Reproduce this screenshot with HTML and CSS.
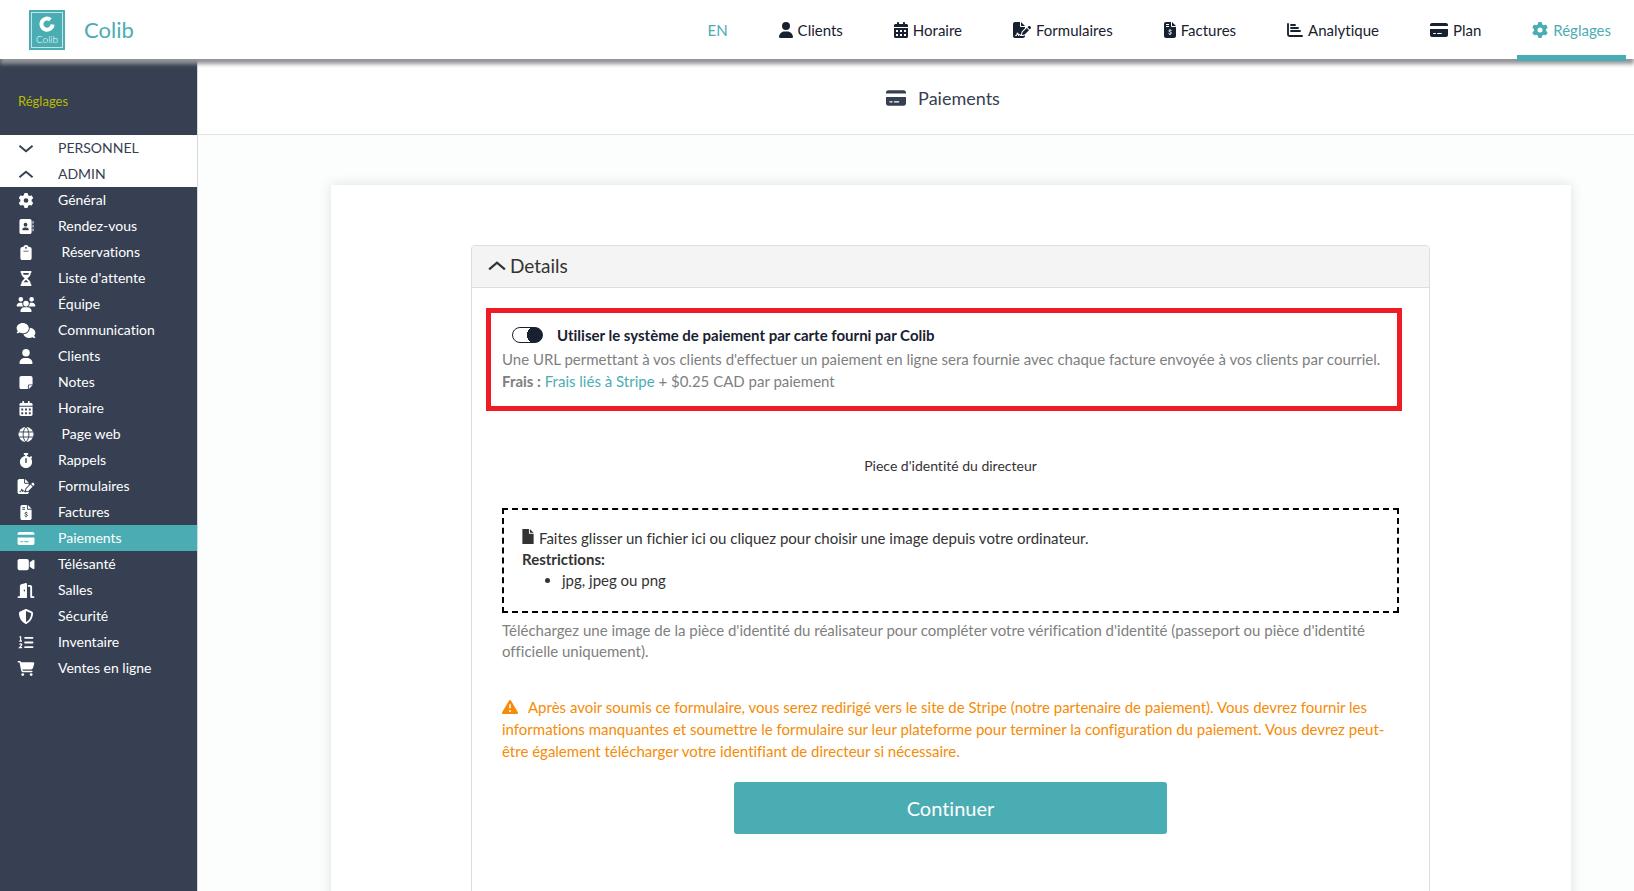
FILE: index.html
```html
<!DOCTYPE html>
<html lang="fr">
<head>
<meta charset="utf-8">
<title>Colib – Paiements</title>
<link rel="stylesheet" href="styles.css">
</head>
<body>
<svg class="sprite" aria-hidden="true">
  <symbol id="user" viewBox="0 0 448 512"><path d="M224 256A128 128 0 1 0 224 0a128 128 0 1 0 0 256zm-45.700 48C79.800 304 0 383.800 0 482.300C0 498.700 13.300 512 29.700 512H418.300c16.400 0 29.700-13.300 29.700-29.700C448 383.800 368.200 304 269.700 304H178.300z"/></symbol>
  <symbol id="calendar" viewBox="0 0 448 512"><path fill-rule="evenodd" d="M128 0c17.700 0 32 14.300 32 32V64H288V32c0-17.700 14.300-32 32-32s32 14.300 32 32V64h48c26.500 0 48 21.500 48 48v48H0V112C0 85.500 21.500 64 48 64H96V32c0-17.700 14.300-32 32-32zM0 192H448V464c0 26.500-21.500 48-48 48H48c-26.500 0-48-21.500-48-48zM64 256v64h64v-64zM192 256v64h64v-64zM320 256v64h64v-64zM64 384v64h64v-64zM192 384v64h64v-64zM320 384v64h64v-64z"/></symbol>
  <symbol id="signature" viewBox="0 0 576 512"><path d="M64 0C28.700 0 0 28.700 0 64V448c0 35.300 28.700 64 64 64H320c35.300 0 64-28.700 64-64V428.700c-2.700 1.100-5.400 2-8.200 2.700l-60.100 15c-3 .7-6 1.200-9 1.400c-.9 .1-1.800 .2-2.700 .2H240c-6.100 0-11.600-3.400-14.300-8.800l-8.800-17.700c-1.700-3.400-5.100-5.500-8.800-5.500s-7.200 2.100-8.800 5.500l-8.800 17.700c-2.900 5.900-9.200 9.400-15.700 8.800s-12.100-5.100-13.900-11.300L144 381l-9.800 32.800c-6.100 20.300-24.800 34.200-46 34.200H80c-8.800 0-16-7.200-16-16s7.200-16 16-16h8.200c7.100 0 13.300-4.600 15.300-11.400l14.900-49.500c3.400-11.300 13.800-19.100 25.600-19.100s22.200 7.700 25.600 19.100l11.600 38.600c7.400-6.200 16.800-9.700 26.800-9.700c15.900 0 30.400 9 37.500 23.200l4.400 8.800h8.900c-3.100-8.800-3.700-18.400-1.400-27.800l15-60.100c2.800-11.300 8.600-21.500 16.800-29.700L384 203.600V160H256c-17.700 0-32-14.300-32-32V0H64zM256 0V128H384L256 0zM549.800 139.700c-15.600-15.600-40.900-15.600-56.600 0l-29.400 29.400 71 71 29.400-29.400c15.600-15.600 15.600-40.900 0-56.600l-14.400-14.400zM311.900 321c-4.100 4.100-7 9.200-8.400 14.900l-15 60.100c-1.400 5.500 .2 11.200 4.200 15.200s9.700 5.600 15.200 4.200l60.100-15c5.600-1.400 10.800-4.300 14.900-8.400L512.100 262.700l-71-71L311.900 321z"/></symbol>
  <symbol id="invoice" viewBox="0 0 384 512"><path fill-rule="evenodd" d="M64 0C28.700 0 0 28.700 0 64V448c0 35.300 28.700 64 64 64H320c35.300 0 64-28.700 64-64V160H256c-17.700 0-32-14.300-32-32V0zM256 0V128H384zM64 64h96v32H64zM64 128h96v32H64z"/><path class="cut" d="M242 276c-18-13-77-26-87 7-10 38 80 29 84 68 2 40-68 38-94 13M192 232v34M192 384v34"/></symbol>
  <symbol id="chart" viewBox="0 0 512 512"><path class="bar" d="M32 64V400a48 48 0 0 0 48 48H480M128 96H256M128 192H352M128 288H416"/></symbol>
  <symbol id="card" viewBox="0 0 576 512"><path fill-rule="evenodd" d="M64 32C28.700 32 0 60.700 0 96v32H576V96c0-35.300-28.700-64-64-64zM576 224H0V416c0 35.300 28.700 64 64 64H512c35.300 0 64-28.700 64-64zM112 352h64c21 0 21 32 0 32h-64c-21 0-21-32 0-32zM240 352h128c21 0 21 32 0 32H240c-21 0-21-32 0-32z"/></symbol>
  <symbol id="gear" viewBox="0 0 512 512"><path d="M495.900 166.600c3.200 8.700 .5 18.400-6.400 24.600l-43.300 39.400c1.100 8.300 1.700 16.800 1.700 25.400s-.6 17.100-1.700 25.400l43.300 39.400c6.900 6.200 9.600 15.900 6.400 24.600c-4.400 11.900-9.700 23.300-15.800 34.300l-4.700 8.100c-6.600 11-14 21.400-22.100 31.200c-5.900 7.200-15.700 9.600-24.500 6.800l-55.700-17.700c-13.400 10.300-28.200 18.900-44 25.400l-12.500 57.100c-2 9.100-9 16.300-18.200 17.800c-13.800 2.300-28 3.500-42.500 3.500s-28.700-1.200-42.500-3.500c-9.200-1.500-16.200-8.700-18.200-17.800l-12.500-57.100c-15.800-6.500-30.600-15.100-44-25.400L83.100 425.900c-8.800 2.800-18.600 .3-24.500-6.800c-8.100-9.800-15.500-20.200-22.100-31.200l-4.700-8.100c-6.100-11-11.400-22.400-15.800-34.300c-3.200-8.700-.5-18.400 6.400-24.600l43.300-39.400C64.600 273.100 64 264.600 64 256s.6-17.100 1.700-25.400L22.400 191.200c-6.900-6.200-9.600-15.900-6.400-24.600c4.400-11.900 9.700-23.300 15.800-34.300l4.700-8.100c6.600-11 14-21.400 22.100-31.200c5.900-7.200 15.700-9.600 24.500-6.800l55.700 17.700c13.400-10.300 28.200-18.900 44-25.400l12.500-57.100c2-9.100 9-16.300 18.200-17.800C227.300 1.200 241.500 0 256 0s28.700 1.200 42.500 3.500c9.200 1.500 16.200 8.700 18.200 17.800l12.500 57.100c15.800 6.500 30.600 15.100 44 25.400l55.700-17.700c8.800-2.800 18.600-.3 24.500 6.800c8.100 9.800 15.500 20.200 22.100 31.200l4.700 8.100c6.100 11 11.400 22.400 15.800 34.300zM256 336a80 80 0 1 0 0-160 80 80 0 1 0 0 160z"/></symbol>
  <symbol id="down" viewBox="0 0 16 16"><path class="line" d="M1 5l7 6 7-6"/></symbol>
  <symbol id="up" viewBox="0 0 16 16"><path class="line" d="M1 11l7-6 7 6"/></symbol>
  <symbol id="contact" viewBox="0 0 512 512"><path fill-rule="evenodd" d="M96 0C60.700 0 32 28.700 32 64V448c0 35.300 28.700 64 64 64H384c35.300 0 64-28.700 64-64V64c0-35.300-28.700-64-64-64zM240 128a64 64 0 1 1 0 128 64 64 0 1 1 0-128zM208 288h64c44.200 0 80 35.800 80 80 0 8.800-7.200 16-16 16H144c-8.800 0-16-7.200-16-16 0-44.200 35.800-80 80-80z"/><path d="M480 64h16q16 0 16 16v64q0 16-16 16h-16zM480 192h16q16 0 16 16v64q0 16-16 16h-16zM480 320h16q16 0 16 16v64q0 16-16 16h-16z"/></symbol>
  <symbol id="clipboard" viewBox="0 0 384 512"><path fill-rule="evenodd" d="M192 0c-41.800 0-77.400 26.700-90.500 64H64C28.700 64 0 92.700 0 128V448c0 35.300 28.700 64 64 64H320c35.300 0 64-28.700 64-64V128c0-35.300-28.700-64-64-64H282.500C269.400 26.700 233.800 0 192 0zm0 64a32 32 0 1 1 0 64 32 32 0 1 1 0-64zM112 192H272c21 0 21 32 0 32H112c-21 0-21-32 0-32z"/></symbol>
  <symbol id="hourglass" viewBox="0 0 384 512"><path fill-rule="evenodd" d="M32 0C-10 0-10 64 32 64V75c0 42.400 16.900 83.100 46.900 113.100L146.700 256 78.900 323.900C48.900 353.900 32 394.600 32 437v11c-42 0-42 64 0 64H352c42 0 42-64 0-64V437c0-42.400-16.900-83.100-46.900-113.100L237.300 256l67.800-67.900C335.100 158.100 352 117.400 352 75V64c42 0 42-64 0-64zM96 64H288c0 29-5 48-16 64H112C101 112 96 93 96 64zM124 369l68-68 68 68q12 11 16 15H108z"/></symbol>
  <symbol id="team" viewBox="0 0 640 512"><path d="M144 0a80 80 0 1 1 0 160A80 80 0 1 1 144 0zM512 0a80 80 0 1 1 0 160A80 80 0 1 1 512 0zM0 298.700C0 239.800 47.800 192 106.700 192h42.700c15.900 0 31 3.500 44.600 9.700-1.300 7.200-1.900 14.700-1.900 22.300 0 38.200 16.800 72.500 43.300 96H21.300C9.600 320 0 310.400 0 298.700zM405.300 320h-.7c26.600-23.500 43.300-57.800 43.300-96 0-7.600-.7-15-1.900-22.300 13.600-6.300 28.700-9.700 44.600-9.700h42.700C592.200 192 640 239.800 640 298.700c0 11.800-9.600 21.300-21.300 21.300zM224 224a96 96 0 1 1 192 0 96 96 0 1 1-192 0zM128 485.300C128 411.700 187.700 352 261.300 352h117.300C452.300 352 512 411.700 512 485.300c0 14.700-11.900 26.700-26.700 26.700H154.700c-14.700 0-26.700-11.900-26.700-26.700z"/></symbol>
  <symbol id="chat" viewBox="0 0 640 512"><path d="M208 352c114.900 0 208-78.800 208-176S322.900 0 208 0 0 78.800 0 176c0 38.600 14.700 74.300 39.600 103.400-8 22-20 34-33.200 43.700C-4 331 0 352 16 352c32 0 64-12 87.300-23.900C134.100 343.300 169.800 352 208 352zM448 176c0 112.300-99.100 196.900-216.500 207C255.800 457.400 336.400 512 432 512c38.200 0 73.900-8.700 104.700-23.900C560 500 592 512 624 512c16 0 20-21 9.600-28.900-13-10-25-22-33.200-43.700C625.300 410.300 640 374.600 640 336c0-92.800-84.900-168.900-192.600-175.500.4 5.100.6 10.300.6 15.500z"/></symbol>
  <symbol id="note" viewBox="0 0 448 512"><path d="M64 32C28.700 32 0 60.700 0 96V416c0 35.300 28.700 64 64 64H288V368c0-26.500 21.500-48 48-48H448V96c0-35.300-28.700-64-64-64zM448 352H336c-8.800 0-16 7.200-16 16V480z"/></symbol>
  <symbol id="globe" viewBox="0 0 512 512"><circle cx="256" cy="256" r="256"/><path class="cut" d="M0 170H512M0 342H512M256 0C125 120 125 392 256 512M256 0C387 120 387 392 256 512"/></symbol>
  <symbol id="timer" viewBox="0 0 448 512"><path fill-rule="evenodd" d="M176 0C134 0 134 64 176 64h16v34.400C92.300 113.800 16 200 16 304c0 114.900 93.100 208 208 208s208-93.100 208-208c0-41.800-12.300-80.700-33.500-113.200l24.100-24.100c30-30-15-75-45.300-45.300l-21 21C328 118 292 103 256 98.400V64h16c42 0 42-64 0-64zM248 192V320c0 32-48 32-48 0V192c0-32 48-32 48 0z"/></symbol>
  <symbol id="video" viewBox="0 0 576 512"><path d="M64 64C28.700 64 0 92.700 0 128V384c0 35.300 28.700 64 64 64H320c35.300 0 64-28.700 64-64V128c0-35.300-28.700-64-64-64zM559 100c10 5 17 16 17 28V384c0 24-26 40-49 27l-111-74V175l111-74c10-6 22-7 32-1z"/></symbol>
  <symbol id="door" viewBox="0 0 576 512"><path fill-rule="evenodd" d="M320 32c0-20-19-35-38-31L127 39C99 46 80 72 80 100V448H32c-42 0-42 64 0 64H320zM256 256c0 42-48 42-48 0s48-42 48 0zM352 64v64h80V480c0 18 14 32 32 32h80c42 0 42-64 0-64H496V128c0-35-29-64-64-64z"/></symbol>
  <symbol id="shield" viewBox="0 0 512 512"><path fill-rule="evenodd" d="M256 0c5 0 9 1 13 3l188 80c22 9 39 31 39 57 0 99-41 281-214 363-17 8-36 8-52 0C57 421 16 239 16 140c0-26 17-48 39-57L243 3c4-2 8-3 13-3zM256 67V444c138-67 175-215 176-303z"/></symbol>
  <symbol id="list" viewBox="0 0 512 512"><path class="bar" d="M224 96H480M224 256H480M224 416H480"/><path class="digit" d="M32 64H72V208M28 208H120M36 325C60 285 112 294 110 334Q106 350 36 432H124"/></symbol>
  <symbol id="cart" viewBox="0 0 576 512"><path d="M24 0C-8 0-8 48 24 48H69l52 272c7 38 40 64 78 64H488c32 0 32-48 0-48H199c-16 0-28-11-31-25l-4-23H459c33 0 61-22 69-54L569 91c7-26-10-51-37-51H120C111 14 97 0 69 0z"/><circle cx="176" cy="464" r="48"/><circle cx="464" cy="464" r="48"/></symbol>
  <symbol id="file" viewBox="0 0 384 512"><path d="M0 0V512H384V160H224V0zM256 0V128H384z"/></symbol>
  <symbol id="warning" viewBox="0 0 512 512"><path fill-rule="evenodd" d="M256 32c14 0 27 7 35 20L507 420c16 27-5 60-35 60H40c-30 0-51-33-35-60L221 52c8-13 21-20 35-20zm-24 128V280c0 32 48 32 48 0V184c0-32-48-32-48 0zM256 352a32 32 0 1 0 0 64 32 32 0 1 0 0-64z"/></symbol>
</svg>

<header class="topbar">
  <a class="brand" href="#">
    <svg class="logo" viewBox="0 0 36 40" aria-hidden="true">
      <rect class="logo-bg" width="36" height="40"/>
      <rect class="logo-frame" x="2.500" y="2.500" width="31" height="35"/>
      <path class="logo-mark" d="M21.500 9.700A5.600 5.600 0 1 0 23.600 14.500"/>
      <text class="logo-text" x="18" y="32.500">Colib</text>
    </svg>
    <span class="brand-name">Colib</span>
  </a>
  <nav class="nav" aria-label="Navigation principale">
    <a class="nav-link accent" href="#">EN</a>
    <a class="nav-link" href="#"><svg class="ico w14"><use href="#user"/></svg>Clients</a>
    <a class="nav-link" href="#"><svg class="ico w14"><use href="#calendar"/></svg>Horaire</a>
    <a class="nav-link" href="#"><svg class="ico w18"><use href="#signature"/></svg>Formulaires</a>
    <a class="nav-link" href="#"><svg class="ico w12"><use href="#invoice"/></svg>Factures</a>
    <a class="nav-link" href="#"><svg class="ico w16"><use href="#chart"/></svg>Analytique</a>
    <a class="nav-link" href="#"><svg class="ico w18"><use href="#card"/></svg>Plan</a>
    <a class="nav-link accent current" href="#" aria-current="page"><svg class="ico w16"><use href="#gear"/></svg>Réglages</a>
  </nav>
</header>

<div class="layout">
  <aside class="sidebar">
    <h2 class="side-title">Réglages</h2>
    <button class="side-row group" type="button"><svg class="side-ico"><use href="#down"/></svg>PERSONNEL</button>
    <button class="side-row group" type="button"><svg class="side-ico"><use href="#up"/></svg>ADMIN</button>
    <nav class="side-nav" aria-label="Réglages">
      <a class="side-row" href="#"><svg class="side-ico"><use href="#gear"/></svg>Général</a>
      <a class="side-row" href="#"><svg class="side-ico"><use href="#contact"/></svg>Rendez-vous</a>
      <a class="side-row" href="#"><svg class="side-ico"><use href="#clipboard"/></svg>&nbsp;Réservations</a>
      <a class="side-row" href="#"><svg class="side-ico"><use href="#hourglass"/></svg>Liste d'attente</a>
      <a class="side-row" href="#"><svg class="side-ico"><use href="#team"/></svg>Équipe</a>
      <a class="side-row" href="#"><svg class="side-ico"><use href="#chat"/></svg>Communication</a>
      <a class="side-row" href="#"><svg class="side-ico"><use href="#user"/></svg>Clients</a>
      <a class="side-row" href="#"><svg class="side-ico"><use href="#note"/></svg>Notes</a>
      <a class="side-row" href="#"><svg class="side-ico"><use href="#calendar"/></svg>Horaire</a>
      <a class="side-row" href="#"><svg class="side-ico"><use href="#globe"/></svg>&nbsp;Page web</a>
      <a class="side-row" href="#"><svg class="side-ico"><use href="#timer"/></svg>Rappels</a>
      <a class="side-row" href="#"><svg class="side-ico"><use href="#signature"/></svg>Formulaires</a>
      <a class="side-row" href="#"><svg class="side-ico"><use href="#invoice"/></svg>Factures</a>
      <a class="side-row active" href="#" aria-current="page"><svg class="side-ico"><use href="#card"/></svg>Paiements</a>
      <a class="side-row" href="#"><svg class="side-ico"><use href="#video"/></svg>Télésanté</a>
      <a class="side-row" href="#"><svg class="side-ico"><use href="#door"/></svg>Salles</a>
      <a class="side-row" href="#"><svg class="side-ico"><use href="#shield"/></svg>Sécurité</a>
      <a class="side-row" href="#"><svg class="side-ico"><use href="#list"/></svg>Inventaire</a>
      <a class="side-row" href="#"><svg class="side-ico"><use href="#cart"/></svg>Ventes en ligne</a>
    </nav>
  </aside>

  <main class="main">
    <h1 class="page-title"><svg class="title-ico"><use href="#card"/></svg>Paiements</h1>
    <div class="card">
      <section class="panel">
        <button class="panel-head" type="button" aria-expanded="true"><svg class="chev"><use href="#up"/></svg>Details</button>
        <div class="panel-body">
          <div class="highlight">
            <label class="toggle-row"><input class="toggle" type="checkbox" role="switch" checked>Utiliser le système de paiement par carte fourni par Colib</label>
            <p class="help">Une URL permettant à vos clients d'effectuer un paiement en ligne sera fournie avec chaque facture envoyée à vos clients par courriel.</p>
            <p class="help"><strong>Frais :</strong> <a class="link" href="#">Frais liés à Stripe</a> + $0.25 CAD par paiement</p>
          </div>
          <h3 class="field-title">Piece d'identité du directeur</h3>
          <button class="dropzone" type="button">
            <span class="drop-line"><svg class="file-ico"><use href="#file"/></svg>Faites glisser un fichier ici ou cliquez pour choisir une image depuis votre ordinateur.</span>
            <strong class="drop-line">Restrictions:</strong>
            <span class="drop-item">jpg, jpeg ou png</span>
          </button>
          <p class="help upload-help">Téléchargez une image de la pièce d'identité du réalisateur pour compléter votre vérification d'identité (passeport ou pièce d'identité officielle uniquement).</p>
          <p class="warning"><svg class="warn-ico"><use href="#warning"/></svg>Après avoir soumis ce formulaire, vous serez redirigé vers le site de Stripe (notre partenaire de paiement). Vous devrez fournir les informations manquantes et soumettre le formulaire sur leur plateforme pour terminer la configuration du paiement. Vous devrez peut-être également télécharger votre identifiant de directeur si nécessaire.</p>
          <button class="submit" type="button">Continuer</button>
        </div>
      </section>
    </div>
  </main>
</div>
</body>
</html>
```

FILE: styles.css
```css
* { box-sizing: border-box; }

body {
  margin: 0;
  height: 100vh;
  display: flex;
  flex-direction: column;
  overflow: hidden;
  font: 15px/22px Lato, "Liberation Sans", sans-serif;
  font-variant-ligatures: none;
  color: #333;
  background: #fcfdfd;
}

a { color: inherit; text-decoration: none; }
button { font: inherit; font-variant-ligatures: none; color: inherit; border: 0; cursor: pointer; }
h1, h2, h3, p { margin: 0; font-weight: 400; }
svg { fill: currentColor; flex: none; }

.sprite { display: none; }
.line { fill: none; stroke: currentColor; stroke-width: 2; }
.bar { fill: none; stroke: currentColor; stroke-width: 60; stroke-linecap: round; }
.digit { fill: none; stroke: currentColor; stroke-width: 42; }
.cut { fill: none; stroke: var(--cut, #fff); stroke-width: 32; }

/* Top bar */
.topbar {
  position: relative;
  z-index: 2;
  flex: none;
  height: 59px;
  padding: 0 8px 0 29px;
  display: flex;
  justify-content: space-between;
  background: #fff;
  box-shadow: 0 5px 4px #929498;
}
.brand { display: flex; align-items: center; gap: 19px; color: #4aadb4; }
.brand-name { font-size: 22px; line-height: 30px; }
.logo { width: 36px; height: 40px; }
.logo-bg { fill: #4aadb4; }
.logo-frame { fill: none; stroke: #c5e4e6; }
.logo-mark { fill: none; stroke: #fff; stroke-width: 4; }
.logo-text { fill: #fff; font-size: 10px; font-weight: 300; text-anchor: middle; }
.nav { display: flex; gap: 21px; }
.nav-link {
  height: 61px;
  padding: 4px 15px;
  display: flex;
  align-items: center;
  gap: 5px;
  border-bottom: 6px solid transparent;
  border-top: 4px solid transparent;
  font-size: 15px;
  color: #18212f;
}
.accent { color: #4aadb4; }
.current { border-bottom-color: #4aadb4; }
.ico { height: 16px; }
.w12 { width: 12px; }
.w14 { width: 14px; }
.w16 { width: 16px; }
.w18 { width: 18px; }

/* Sidebar */
.layout { flex: 1; min-height: 0; display: flex; }
.sidebar {
  --cut: #364052;
  flex: none;
  width: 198px;
  border-right: 1px solid #d5d8da;
  background: #364052;
  color: #fff;
  font-size: 14px;
}
.side-title {
  height: 76px;
  padding: 8px 18px 0;
  font-size: 13px;
  line-height: 68px;
  color: #b9bb00;
}
.side-row {
  width: 100%;
  height: 26px;
  padding: 0 16px;
  display: flex;
  align-items: center;
  gap: 22px;
  text-align: left;
}
.side-ico { width: 20px; height: 15px; }
.group { background: #fff; color: #364052; }
.active { background: #4aadb4; }

/* Main column */
.main { flex: 1; min-width: 0; overflow: hidden; }
.page-title {
  height: 76px;
  padding: 2px 0 0 54px;
  display: flex;
  align-items: center;
  justify-content: center;
  gap: 12px;
  font-size: 18px;
  color: #364052;
  background: #fff;
  border-bottom: 1px solid #e1e4e4;
}
.title-ico { width: 20px; height: 18px; }
.card {
  margin: 50px 63px 0 133px;
  padding: 60px 141px 60px 140px;
  background: #fff;
  box-shadow: 0 0 12px rgba(0, 0, 0, .12);
}
.panel { border: 1px solid #ddd; border-radius: 4px; padding-bottom: 100px; }
.panel-head {
  width: 100%;
  height: 42px;
  padding: 0 16px 2px;
  display: flex;
  align-items: center;
  gap: 4px;
  font-size: 19px;
  background: #f4f4f4;
  border-bottom: 1px solid #ddd;
  border-radius: 3px 3px 0 0;
}
.chev { width: 18px; height: 18px; }
.panel-body { padding: 20px 30px 0; display: flex; flex-direction: column; }
.highlight {
  margin: 0 -3px 0 -16px;
  padding: 10px 11px 14px;
  border: 5px solid #ee1c25;
}
.toggle-row {
  margin-bottom: 1px;
  padding-left: 10px;
  display: flex;
  align-items: center;
  gap: 14px;
  line-height: 24px;
  font-weight: 700;
  color: #18212f;
}
.toggle {
  appearance: none;
  flex: none;
  width: 31px;
  height: 16px;
  margin: 0;
  border: 1px solid #18212f;
  border-radius: 8px;
  background: radial-gradient(circle at 22px 7px, #18212f 8px, transparent 8px);
  background-origin: padding-box;
}
.help { color: #808080; }
.link { color: #4aadb4; }
.field-title { margin: 44px 0 31px; text-align: center; font-size: 14px; }
.dropzone {
  padding: 18px 18px 20px;
  display: flex;
  flex-direction: column;
  text-align: left;
  line-height: 21px;
  background: #fff;
  border: 2px dashed #000;
}
.drop-line { display: block; }
.drop-item { display: list-item; margin-left: 40px; list-style: disc; }
.file-ico { width: 12px; height: 15px; margin-right: 5px; }
.upload-help { margin-top: 7px; line-height: 21px; }
.warning { margin: 34px 0 20px; color: #f68b06; }
.warn-ico { width: 16px; height: 16px; margin-right: 10px; vertical-align: -2px; }
.submit {
  width: min(433px, 100%);
  height: 52px;
  align-self: center;
  font-size: 20px;
  color: #fff;
  background: #4aadb4;
  border-radius: 3px;
}
```
